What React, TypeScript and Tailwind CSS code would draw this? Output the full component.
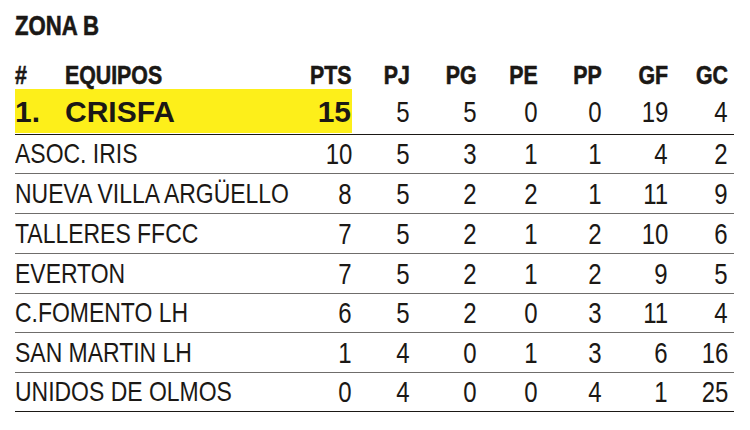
const sans = { fontFamily: "'Liberation Sans', Arial, sans-serif" }

type Row = {
  team: string
  pts: number
  pj: number
  pg: number
  pe: number
  pp: number
  gf: number
  gc: number
  tall: boolean
}

const leader = { pj: 5, pg: 5, pe: 0, pp: 0, gf: 19, gc: 4 }

const rows: Row[] = [
  { team: 'ASOC. IRIS', pts: 10, pj: 5, pg: 3, pe: 1, pp: 1, gf: 4, gc: 2, tall: false },
  { team: 'NUEVA VILLA ARGÜELLO', pts: 8, pj: 5, pg: 2, pe: 2, pp: 1, gf: 11, gc: 9, tall: true },
  { team: 'TALLERES FFCC', pts: 7, pj: 5, pg: 2, pe: 1, pp: 2, gf: 10, gc: 6, tall: true },
  { team: 'EVERTON', pts: 7, pj: 5, pg: 2, pe: 1, pp: 2, gf: 9, gc: 5, tall: true },
  { team: 'C.FOMENTO LH', pts: 6, pj: 5, pg: 2, pe: 0, pp: 3, gf: 11, gc: 4, tall: false },
  { team: 'SAN MARTIN LH', pts: 1, pj: 4, pg: 0, pe: 1, pp: 3, gf: 6, gc: 16, tall: true },
  { team: 'UNIDOS DE OLMOS', pts: 0, pj: 4, pg: 0, pe: 0, pp: 4, gf: 1, gc: 25, tall: false },
]

const grid = 'grid grid-cols-[50px_235px_52px_58px_67px_61px_64px_66px_66px]'

// no condensed family installed, so squeeze Liberation Sans horizontally
function L({ children }: { children: React.ReactNode }) {
  return <span className="inline-block whitespace-nowrap scale-x-[0.82] origin-left">{children}</span>
}

function R({ children, last }: { children: React.ReactNode; last?: boolean }) {
  return (
    <span className={`text-right ${last ? 'pr-[6px]' : ''}`}>
      <span className="inline-block whitespace-nowrap scale-x-[0.82] origin-right">{children}</span>
    </span>
  )
}

// figures run a touch taller than the letters in the print
function Num({ children, last }: { children: React.ReactNode; last?: boolean }) {
  return (
    <span className={`text-right text-[30px] ${last ? 'pr-[6px]' : ''}`}>
      <span className="inline-block whitespace-nowrap scale-x-[0.8] origin-right">{children}</span>
    </span>
  )
}

function Stats({ r }: { r: Omit<Row, 'team' | 'pts' | 'tall'> }) {
  return (
    <>
      <Num>{r.pj}</Num>
      <Num>{r.pg}</Num>
      <Num>{r.pe}</Num>
      <Num>{r.pp}</Num>
      <Num>{r.gf}</Num>
      <Num last>{r.gc}</Num>
    </>
  )
}

const heavy = '[-webkit-text-stroke:0.6px_#1b1815]'

export default function App() {
  return (
    <div className="w-[750px] h-[430px] bg-white text-[#1b1815] pl-[15px] pt-[11px]" style={sans}>
      <div className={`text-[27px] leading-[30px] font-bold ${heavy}`}>
        <L>ZONA B</L>
      </div>

      <div className={`${grid} mt-[19px] text-[26px] leading-[30px] font-bold w-[719px] ${heavy}`}>
        <L>#</L>
        <L>EQUIPOS</L>
        <R>PTS</R>
        <R>PJ</R>
        <R>PG</R>
        <R>PE</R>
        <R>PP</R>
        <R>GF</R>
        <R last>GC</R>
      </div>

      <div className={`${grid} w-[719px] h-[45px] border-b border-[#1b1815] text-[28px] leading-[44px] items-start`}>
        <span className="col-span-3 h-[44px] bg-[#fdef1a] -mt-[1px] flex justify-between pr-px font-bold text-[30px] leading-[46px]">
          <span className="flex">
            <span className="w-[50px]">1.</span>
            <span>CRISFA</span>
          </span>
          <span>15</span>
        </span>
        <Stats r={leader} />
      </div>

      {rows.map((r, i) => (
        <div
          key={r.team}
          className={`${grid} w-[719px] items-center text-[28px] leading-none border-b ${
            r.tall ? 'h-[40px]' : 'h-[39px]'
          } ${i === rows.length - 1 ? 'border-[#1b1815]' : 'border-[#6f6d6b]'}`}
        >
          <span className="col-span-2">
            <L>{r.team}</L>
          </span>
          <Num>{r.pts}</Num>
          <Stats r={r} />
        </div>
      ))}
    </div>
  )
}
